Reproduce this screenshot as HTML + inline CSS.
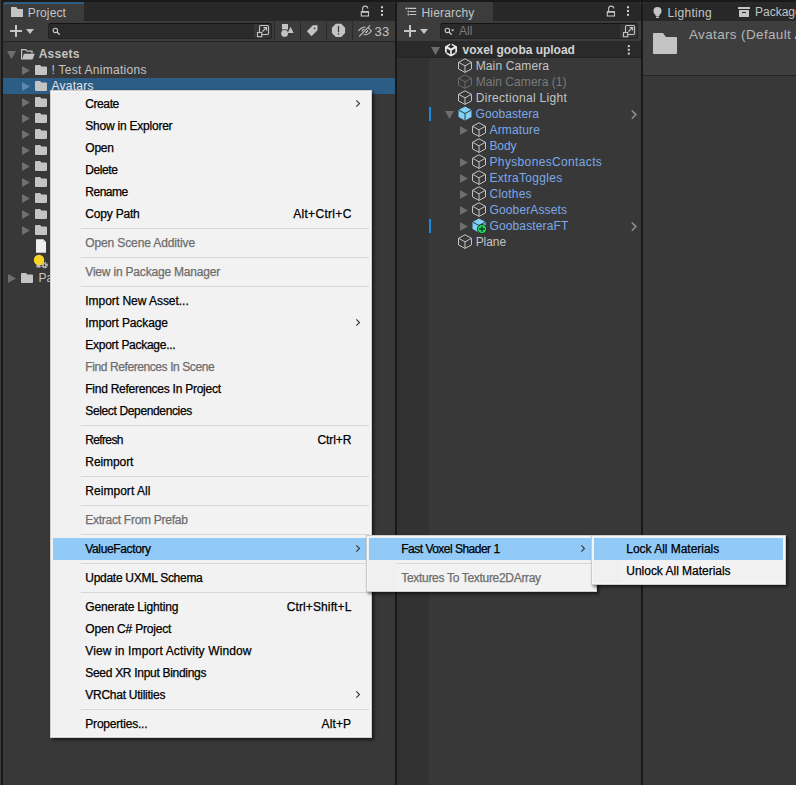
<!DOCTYPE html>
<html><head><meta charset="utf-8">
<style>
*{margin:0;padding:0;box-sizing:border-box}
html,body{width:796px;height:785px;overflow:hidden;background:#191919;font-family:"Liberation Sans",sans-serif;font-size:12px;color:#d2d2d2}
.a{position:absolute}
.t{position:absolute;white-space:nowrap;line-height:16px;height:16px}
svg{position:absolute;overflow:visible}
/* menu */
.menu{position:absolute;background:linear-gradient(to right,#f0f0f0 30px,#f2f2f2 30px);border:1px solid #cccccc;-webkit-text-stroke:0.25px currentColor;box-shadow:inset 1px 1px 0 #f6f6f6,inset -1px -1px 0 #f6f6f6,2px 2px 3px rgba(0,0,0,0.55);font-size:12px;color:#000}
.mi{position:absolute;left:0;right:0;height:22px;line-height:22px;white-space:nowrap}
.mi .l{position:absolute}
.mi .s{position:absolute}
.mi.d{color:#6d6d6d}
.mi.h::before{content:"";position:absolute;left:2px;right:2px;top:0;bottom:0;background:#91c9f7}
.sep{position:absolute;left:30px;right:2px;height:1px;background:#d7d7d7}
.arr{position:absolute;right:11px;top:7px;width:5px;height:8px}
</style></head><body>

<!-- left edge strip -->
<div class="a" style="left:0;top:0;width:1px;height:785px;background:#3a3a3a"></div>

<!-- ================= PROJECT PANEL ================= -->
<div class="a" style="left:3px;top:2px;width:392px;height:783px;background:#383838"></div>
<div class="a" style="left:3px;top:2px;width:392px;height:19px;background:#282828;border-radius:4px 4px 0 0"></div>
<!-- tab -->
<div class="a" style="left:3px;top:2px;width:81px;height:19px;background:#3c3c3c;border-radius:4px 0 0 0;border-top:2px solid #2c5d87"></div>
<svg style="left:0;top:0" width="40" height="20"><path d="M11 7H16.2L17.8 9H23V17H11Z" fill="#c4c4c4"/></svg>
<div class="t" style="left:27.80px;top:5px;color:#c4c4c4;font-size:12px;letter-spacing:0.133px">Project</div>
<!-- lock & dots -->
<svg style="left:0;top:0" width="396" height="20"><path d="M362.6 11V8.8A2.6 2.6 0 0 1 367.8 8.6" fill="none" stroke="#c4c4c4" stroke-width="1.1"/><rect x="361.3" y="11.6" width="7.2" height="4.4" fill="none" stroke="#c4c4c4" stroke-width="1.1"/><rect x="361.3" y="11.2" width="7.2" height="1.6" fill="#c4c4c4"/></svg>
<svg style="left:0;top:0" width="396" height="20"><rect x="381" y="6.2" width="2" height="2" fill="#d0d0d0"/><rect x="381" y="10" width="2" height="2" fill="#d0d0d0"/><rect x="381" y="13.8" width="2" height="2" fill="#d0d0d0"/></svg>
<!-- toolbar -->
<div class="a" style="left:3px;top:21px;width:392px;height:20px;background:#3c3c3c"></div>
<div class="a" style="left:3px;top:41px;width:392px;height:1px;background:#242424"></div>
<svg style="left:10px;top:25px" width="12" height="12"><path d="M6 0V12M0 6H12" stroke="#c4c4c4" stroke-width="2"/></svg>
<svg style="left:26px;top:29px" width="8" height="5"><path d="M0 0H8L4 5Z" fill="#c4c4c4"/></svg>
<div class="a" style="left:48px;top:23px;width:224px;height:16px;background:#2a2a2a;border:1px solid #232323;border-top-color:#151515;border-radius:3px"></div>
<div class="a" style="left:254px;top:24px;width:17px;height:14px;background:#353535;border-radius:0 3px 3px 0"></div>
<svg style="left:0;top:0" width="80" height="42"><circle cx="55.4" cy="30.4" r="2.2" fill="none" stroke="#c8c8c8" stroke-width="1.1"/><path d="M57 32L59.7 34.7" stroke="#c8c8c8" stroke-width="1.3"/></svg>
<svg style="left:0;top:0" width="396" height="42"><rect x="259.5" y="25.5" width="9" height="9" rx="1.2" fill="none" stroke="#c4c4c4" stroke-width="1.1"/><rect x="257.5" y="32.5" width="4.2" height="4.2" fill="#2f2f2f" stroke="#c4c4c4" stroke-width="1.1"/><path d="M262.5 31.5L266.3 27.7M263.5 27.5H266.5V30.5" fill="none" stroke="#c4c4c4" stroke-width="1.2"/></svg>
<div class="a" style="left:274px;top:21px;width:1px;height:20px;background:#2a2a2a"></div>
<div class="a" style="left:300px;top:21px;width:1px;height:20px;background:#2a2a2a"></div>
<div class="a" style="left:326px;top:21px;width:1px;height:20px;background:#2a2a2a"></div>
<div class="a" style="left:352px;top:21px;width:1px;height:20px;background:#2a2a2a"></div>
<svg style="left:0;top:0" width="396" height="42"><rect x="282" y="24" width="6" height="5.6" fill="#c4c4c4"/><circle cx="284.6" cy="33.4" r="3.9" fill="#3c3c3c"/><path d="M290.6 25.8L294.4 33.6H286.8Z" fill="#3c3c3c"/><circle cx="284.6" cy="33.4" r="3.4" fill="#c4c4c4"/><path d="M290.6 26.8L293.6 33H287.6Z" fill="#c4c4c4"/></svg>
<svg style="left:0;top:0" width="396" height="42"><path d="M307.2 31.2L313 25.6H317.2V30.2L311.5 35.9Z" fill="#c4c4c4" stroke="#c4c4c4" stroke-width="0.6" stroke-linejoin="round"/><circle cx="314.6" cy="28.3" r="0.9" fill="#3c3c3c"/></svg>
<svg style="left:0;top:0" width="396" height="42"><path d="M335.8 23.8H341.2L345.1 27.7V33.1L341.2 37H335.8L331.9 33.1V27.7Z" fill="#c4c4c4"/><path d="M338.5 26V32.2" stroke="#3c3c3c" stroke-width="1.3"/><rect x="337.8" y="33.2" width="1.4" height="1.4" fill="#3c3c3c"/></svg>
<svg style="left:0;top:0" width="396" height="42"><path d="M358.4 31C360.5 28.2 363.6 27 365.5 27M368 28C369.5 28.7 370.5 29.8 371.4 31C369.5 33.6 366.5 35 363.5 34.7" fill="none" stroke="#c4c4c4" stroke-width="1.1"/><path d="M362 31.5A3 3 0 0 1 364.5 29" fill="none" stroke="#c4c4c4" stroke-width="1.2"/><path d="M365.5 33L368 30.5" stroke="#c4c4c4" stroke-width="1.1"/><path d="M359.2 36.3L370.2 25.3" stroke="#c4c4c4" stroke-width="1.1"/></svg>
<div class="t" style="left:374.6px;top:24px;color:#c4c4c4;font-size:13px;letter-spacing:0.3px">33</div>

<!-- project tree -->
<div class="a" style="left:3px;top:78px;width:392px;height:16px;background:#2c5d87"></div>
<svg style="left:7px;top:51px" width="9" height="8"><path d="M0 0H9L4.5 8Z" fill="#6e6e6e"/></svg>
<svg style="left:21px;top:49px" width="14" height="11"><path d="M0.6 10.4V0.6H4.6L6.1 2.1H11V4.5" fill="none" stroke="#c4c4c4" stroke-width="1.2"/><path d="M3 4.8H13.8L11.5 10.5H1Z" fill="#c4c4c4"/></svg>
<svg style="left:22px;top:66px" width="8" height="9"><path d="M0 0L8 4.5L0 9Z" fill="#6e6e6e"/></svg>
<svg style="left:35px;top:65px" width="12" height="10"><path d="M1 0H5L6.5 1.5H11A1 1 0 0 1 12 2.5V9A1 1 0 0 1 11 10H1A1 1 0 0 1 0 9V1A1 1 0 0 1 1 0Z" fill="#c4c4c4"/></svg>
<svg style="left:22px;top:82px" width="8" height="9"><path d="M0 0L8 4.5L0 9Z" fill="#5f87ab"/></svg>
<svg style="left:35px;top:81px" width="12" height="10"><path d="M1 0H5L6.5 1.5H11A1 1 0 0 1 12 2.5V9A1 1 0 0 1 11 10H1A1 1 0 0 1 0 9V1A1 1 0 0 1 1 0Z" fill="#c4c4c4"/></svg>
<svg style="left:22px;top:98px" width="8" height="9"><path d="M0 0L8 4.5L0 9Z" fill="#6e6e6e"/></svg>
<svg style="left:35px;top:97px" width="12" height="10"><path d="M1 0H5L6.5 1.5H11A1 1 0 0 1 12 2.5V9A1 1 0 0 1 11 10H1A1 1 0 0 1 0 9V1A1 1 0 0 1 1 0Z" fill="#c4c4c4"/></svg>
<svg style="left:22px;top:114px" width="8" height="9"><path d="M0 0L8 4.5L0 9Z" fill="#6e6e6e"/></svg>
<svg style="left:35px;top:113px" width="12" height="10"><path d="M1 0H5L6.5 1.5H11A1 1 0 0 1 12 2.5V9A1 1 0 0 1 11 10H1A1 1 0 0 1 0 9V1A1 1 0 0 1 1 0Z" fill="#c4c4c4"/></svg>
<svg style="left:22px;top:130px" width="8" height="9"><path d="M0 0L8 4.5L0 9Z" fill="#6e6e6e"/></svg>
<svg style="left:35px;top:129px" width="12" height="10"><path d="M1 0H5L6.5 1.5H11A1 1 0 0 1 12 2.5V9A1 1 0 0 1 11 10H1A1 1 0 0 1 0 9V1A1 1 0 0 1 1 0Z" fill="#c4c4c4"/></svg>
<svg style="left:22px;top:146px" width="8" height="9"><path d="M0 0L8 4.5L0 9Z" fill="#6e6e6e"/></svg>
<svg style="left:35px;top:145px" width="12" height="10"><path d="M1 0H5L6.5 1.5H11A1 1 0 0 1 12 2.5V9A1 1 0 0 1 11 10H1A1 1 0 0 1 0 9V1A1 1 0 0 1 1 0Z" fill="#c4c4c4"/></svg>
<svg style="left:22px;top:162px" width="8" height="9"><path d="M0 0L8 4.5L0 9Z" fill="#6e6e6e"/></svg>
<svg style="left:35px;top:161px" width="12" height="10"><path d="M1 0H5L6.5 1.5H11A1 1 0 0 1 12 2.5V9A1 1 0 0 1 11 10H1A1 1 0 0 1 0 9V1A1 1 0 0 1 1 0Z" fill="#c4c4c4"/></svg>
<svg style="left:22px;top:178px" width="8" height="9"><path d="M0 0L8 4.5L0 9Z" fill="#6e6e6e"/></svg>
<svg style="left:35px;top:177px" width="12" height="10"><path d="M1 0H5L6.5 1.5H11A1 1 0 0 1 12 2.5V9A1 1 0 0 1 11 10H1A1 1 0 0 1 0 9V1A1 1 0 0 1 1 0Z" fill="#c4c4c4"/></svg>
<svg style="left:22px;top:194px" width="8" height="9"><path d="M0 0L8 4.5L0 9Z" fill="#6e6e6e"/></svg>
<svg style="left:35px;top:193px" width="12" height="10"><path d="M1 0H5L6.5 1.5H11A1 1 0 0 1 12 2.5V9A1 1 0 0 1 11 10H1A1 1 0 0 1 0 9V1A1 1 0 0 1 1 0Z" fill="#c4c4c4"/></svg>
<svg style="left:22px;top:210px" width="8" height="9"><path d="M0 0L8 4.5L0 9Z" fill="#6e6e6e"/></svg>
<svg style="left:35px;top:209px" width="12" height="10"><path d="M1 0H5L6.5 1.5H11A1 1 0 0 1 12 2.5V9A1 1 0 0 1 11 10H1A1 1 0 0 1 0 9V1A1 1 0 0 1 1 0Z" fill="#c4c4c4"/></svg>
<svg style="left:22px;top:226px" width="8" height="9"><path d="M0 0L8 4.5L0 9Z" fill="#6e6e6e"/></svg>
<svg style="left:35px;top:225px" width="12" height="10"><path d="M1 0H5L6.5 1.5H11A1 1 0 0 1 12 2.5V9A1 1 0 0 1 11 10H1A1 1 0 0 1 0 9V1A1 1 0 0 1 1 0Z" fill="#c4c4c4"/></svg>
<svg style="left:35px;top:239px" width="12" height="15"><path d="M1 0.2H8.3L11 2.9V13.8H1Z" fill="#efefef"/><path d="M8.3 0.2V2.9H11Z" fill="#c8c8c8"/></svg>
<svg style="left:33px;top:254px" width="16" height="15"><circle cx="6" cy="6" r="5.2" fill="#f6d523"/><rect x="3.5" y="11" width="4" height="2.5" fill="#bcbcbc"/><g transform="translate(11.5 11.2)"><circle r="2.6" fill="none" stroke="#e6e6e6" stroke-width="1.3" stroke-dasharray="1.2 0.85"/><circle r="1.6" fill="none" stroke="#e6e6e6" stroke-width="1"/></g></svg>
<svg style="left:8px;top:274px" width="8" height="9"><path d="M0 0L8 4.5L0 9Z" fill="#6e6e6e"/></svg>
<svg style="left:21px;top:273px" width="12" height="10"><path d="M1 0H5L6.5 1.5H11A1 1 0 0 1 12 2.5V9A1 1 0 0 1 11 10H1A1 1 0 0 1 0 9V1A1 1 0 0 1 1 0Z" fill="#c4c4c4"/></svg>
<div class="t" style="left:38.70px;top:46px;color:#c4c4c4;font-size:12px;font-weight:bold;letter-spacing:0.260px">Assets</div>
<div class="t" style="left:51.40px;top:62px;color:#c4c4c4;font-size:12px;letter-spacing:0.281px">! Test Animations</div>
<div class="t" style="left:51.50px;top:78px;color:#e4e4e4;font-size:12px;letter-spacing:0.267px">Avatars</div>
<div class="t" style="left:38.50px;top:270px;color:#c4c4c4;font-size:12px;letter-spacing:0.000px">Pa</div>

<!-- ================= HIERARCHY PANEL ================= -->
<div class="a" style="left:397px;top:2px;width:244px;height:783px;background:#383838"></div>
<div class="a" style="left:397px;top:2px;width:244px;height:19px;background:#282828;border-radius:4px 4px 0 0"></div>
<div class="a" style="left:397px;top:2px;width:96px;height:19px;background:#3c3c3c;border-radius:4px 0 0 0"></div>
<svg style="left:0;top:0" width="420" height="20"><path d="M407.8 8.4H416.2M409.8 11.5H416.2M409.8 14.5H416.2" stroke="#c8c8c8" stroke-width="1.2"/><path d="M405.2 8.4L406.4 7.2L407.6 8.4L406.4 9.6Z M407.2 11.5L408.4 10.3L409.6 11.5L408.4 12.7Z M407.2 14.5L408.4 13.3L409.6 14.5L408.4 15.7Z" fill="#c8c8c8"/><path d="M408.4 10V15.5" stroke="#8a8a8a" stroke-width="0.6"/></svg>
<div class="t" style="left:421.50px;top:5px;color:#c4c4c4;font-size:12px;letter-spacing:0.188px">Hierarchy</div>
<svg style="left:246px;top:0" width="396" height="20"><path d="M362.6 11V8.8A2.6 2.6 0 0 1 367.8 8.6" fill="none" stroke="#c4c4c4" stroke-width="1.1"/><rect x="361.3" y="11.6" width="7.2" height="4.4" fill="none" stroke="#c4c4c4" stroke-width="1.1"/><rect x="361.3" y="11.2" width="7.2" height="1.6" fill="#c4c4c4"/></svg>
<svg style="left:246px;top:0" width="396" height="20"><rect x="381" y="6.2" width="2" height="2" fill="#d0d0d0"/><rect x="381" y="10" width="2" height="2" fill="#d0d0d0"/><rect x="381" y="13.8" width="2" height="2" fill="#d0d0d0"/></svg>
<div class="a" style="left:397px;top:21px;width:244px;height:20px;background:#3c3c3c"></div>
<svg style="left:404px;top:25px" width="12" height="12"><path d="M6 0V12M0 6H12" stroke="#c4c4c4" stroke-width="2"/></svg>
<svg style="left:420px;top:29px" width="8" height="5"><path d="M0 0H8L4 5Z" fill="#c4c4c4"/></svg>
<div class="a" style="left:440px;top:23px;width:198px;height:16px;background:#2a2a2a;border:1px solid #232323;border-top-color:#151515;border-radius:3px"></div>
<div class="a" style="left:620px;top:24px;width:17px;height:14px;background:#353535;border-radius:0 3px 3px 0"></div>
<svg style="left:392px;top:0" width="80" height="42"><circle cx="55.4" cy="30.4" r="2.2" fill="none" stroke="#c8c8c8" stroke-width="1.1"/><path d="M57 32L59.7 34.7" stroke="#c8c8c8" stroke-width="1.3"/><path d="M59 29.6H62.4L60.7 31.6Z" fill="#c8c8c8"/></svg>
<div class="t" style="left:459px;top:23px;color:#7c7c7c">All</div>
<svg style="left:366px;top:0" width="396" height="42"><rect x="259.5" y="25.5" width="9" height="9" rx="1.2" fill="none" stroke="#c4c4c4" stroke-width="1.1"/><rect x="257.5" y="32.5" width="4.2" height="4.2" fill="#2f2f2f" stroke="#c4c4c4" stroke-width="1.1"/><path d="M262.5 31.5L266.3 27.7M263.5 27.5H266.5V30.5" fill="none" stroke="#c4c4c4" stroke-width="1.2"/></svg>
<!-- scene header -->
<div class="a" style="left:397px;top:41px;width:244px;height:16px;background:#2a2a2a"></div>
<div class="a" style="left:397px;top:57px;width:244px;height:1px;background:#242424"></div>
<div class="a" style="left:397px;top:58px;width:32px;height:727px;background:#323232"></div>
<svg style="left:431px;top:47px" width="9" height="8"><path d="M0 0H9L4.5 8Z" fill="#6e6e6e"/></svg>
<svg style="left:0;top:0" width="641" height="60"><path d="M451 43L457 46.4V53.2L451 56.6L445 53.2V46.4Z" fill="#ececec"/><path d="M446.7 48.5L450.2 50.5V54.3L446.7 52.3Z M455.3 48.5L451.8 50.5V54.3L455.3 52.3Z M450.2 42.6H451.8V45.3L454.3 46.6L451 48.4L447.7 46.6L450.2 45.3Z M444.4 51.8L446.8 53.2L446.2 54L444.4 53Z M457.6 51.8L455.2 53.2L455.8 54L457.6 53Z" fill="#2a2a2a"/></svg>
<svg style="left:0;top:0" width="641" height="60"><rect x="627.8" y="45.1" width="2" height="2" fill="#d0d0d0"/><rect x="627.8" y="48.8" width="2" height="2" fill="#d0d0d0"/><rect x="627.8" y="52.6" width="2" height="2" fill="#d0d0d0"/></svg>
<svg style="left:458px;top:58px" width="14" height="15" viewBox="0 0 14 15"><path d="M7 0.8L13.5 4.3V10.9L7 14.4L0.5 10.9V4.3Z" fill="none" stroke="#c4c4c4" stroke-width="1" stroke-linejoin="round"/><path d="M0.8 4.4L7 7.8L13.2 4.4M7 7.8V14.2" fill="none" stroke="#c4c4c4" stroke-width="1"/></svg>
<svg style="left:458px;top:74px" width="14" height="15" viewBox="0 0 14 15"><path d="M7 0.8L13.5 4.3V10.9L7 14.4L0.5 10.9V4.3Z" fill="none" stroke="#6a6a6a" stroke-width="1" stroke-linejoin="round"/><path d="M0.8 4.4L7 7.8L13.2 4.4M7 7.8V14.2" fill="none" stroke="#6a6a6a" stroke-width="1"/></svg>
<svg style="left:458px;top:90px" width="14" height="15" viewBox="0 0 14 15"><path d="M7 0.8L13.5 4.3V10.9L7 14.4L0.5 10.9V4.3Z" fill="none" stroke="#c4c4c4" stroke-width="1" stroke-linejoin="round"/><path d="M0.8 4.4L7 7.8L13.2 4.4M7 7.8V14.2" fill="none" stroke="#c4c4c4" stroke-width="1"/></svg>
<svg style="left:445px;top:111px" width="9" height="8"><path d="M0 0H9L4.5 8Z" fill="#6e6e6e"/></svg>
<svg style="left:458px;top:106px" width="14" height="15" viewBox="0 0 14 15"><path d="M7 0.5L13.5 4V11L7 14.5L0.5 11V4Z" fill="#7fd1f5"/><path d="M0.8 4.2L7 7.5L13.2 4.2M7 7.5V14.3" fill="none" stroke="#2b3a44" stroke-width="1"/></svg>
<div class="a" style="left:429px;top:107px;width:2px;height:14px;background:#1f8ad8"></div>
<svg style="left:631px;top:110px" width="6" height="9"><path d="M0.8 0.6L5 4.6L0.8 8.6" fill="none" stroke="#8e8e8e" stroke-width="1.5"/></svg>
<svg style="left:460px;top:126px" width="8" height="9"><path d="M0 0L8 4.5L0 9Z" fill="#6e6e6e"/></svg>
<svg style="left:472px;top:122px" width="14" height="15" viewBox="0 0 14 15"><path d="M7 0.8L13.5 4.3V10.9L7 14.4L0.5 10.9V4.3Z" fill="none" stroke="#c4c4c4" stroke-width="1" stroke-linejoin="round"/><path d="M0.8 4.4L7 7.8L13.2 4.4M7 7.8V14.2" fill="none" stroke="#c4c4c4" stroke-width="1"/></svg>
<svg style="left:472px;top:138px" width="14" height="15" viewBox="0 0 14 15"><path d="M7 0.8L13.5 4.3V10.9L7 14.4L0.5 10.9V4.3Z" fill="none" stroke="#c4c4c4" stroke-width="1" stroke-linejoin="round"/><path d="M0.8 4.4L7 7.8L13.2 4.4M7 7.8V14.2" fill="none" stroke="#c4c4c4" stroke-width="1"/></svg>
<svg style="left:460px;top:158px" width="8" height="9"><path d="M0 0L8 4.5L0 9Z" fill="#6e6e6e"/></svg>
<svg style="left:472px;top:154px" width="14" height="15" viewBox="0 0 14 15"><path d="M7 0.8L13.5 4.3V10.9L7 14.4L0.5 10.9V4.3Z" fill="none" stroke="#c4c4c4" stroke-width="1" stroke-linejoin="round"/><path d="M0.8 4.4L7 7.8L13.2 4.4M7 7.8V14.2" fill="none" stroke="#c4c4c4" stroke-width="1"/></svg>
<svg style="left:460px;top:174px" width="8" height="9"><path d="M0 0L8 4.5L0 9Z" fill="#6e6e6e"/></svg>
<svg style="left:472px;top:170px" width="14" height="15" viewBox="0 0 14 15"><path d="M7 0.8L13.5 4.3V10.9L7 14.4L0.5 10.9V4.3Z" fill="none" stroke="#c4c4c4" stroke-width="1" stroke-linejoin="round"/><path d="M0.8 4.4L7 7.8L13.2 4.4M7 7.8V14.2" fill="none" stroke="#c4c4c4" stroke-width="1"/></svg>
<svg style="left:460px;top:190px" width="8" height="9"><path d="M0 0L8 4.5L0 9Z" fill="#6e6e6e"/></svg>
<svg style="left:472px;top:186px" width="14" height="15" viewBox="0 0 14 15"><path d="M7 0.8L13.5 4.3V10.9L7 14.4L0.5 10.9V4.3Z" fill="none" stroke="#c4c4c4" stroke-width="1" stroke-linejoin="round"/><path d="M0.8 4.4L7 7.8L13.2 4.4M7 7.8V14.2" fill="none" stroke="#c4c4c4" stroke-width="1"/></svg>
<svg style="left:460px;top:206px" width="8" height="9"><path d="M0 0L8 4.5L0 9Z" fill="#6e6e6e"/></svg>
<svg style="left:472px;top:202px" width="14" height="15" viewBox="0 0 14 15"><path d="M7 0.8L13.5 4.3V10.9L7 14.4L0.5 10.9V4.3Z" fill="none" stroke="#c4c4c4" stroke-width="1" stroke-linejoin="round"/><path d="M0.8 4.4L7 7.8L13.2 4.4M7 7.8V14.2" fill="none" stroke="#c4c4c4" stroke-width="1"/></svg>
<svg style="left:460px;top:222px" width="8" height="9"><path d="M0 0L8 4.5L0 9Z" fill="#6e6e6e"/></svg>
<svg style="left:472px;top:218px" width="14" height="15" viewBox="0 0 14 15"><path d="M7 0.5L13.5 4V11L7 14.5L0.5 11V4Z" fill="#7fd1f5"/><path d="M0.8 4.2L7 7.5L13.2 4.2M7 7.5V14.3" fill="none" stroke="#2b3a44" stroke-width="1"/></svg>
<div class="a" style="left:429px;top:219px;width:2px;height:14px;background:#1f8ad8"></div>
<svg style="left:631px;top:222px" width="6" height="9"><path d="M0.8 0.6L5 4.6L0.8 8.6" fill="none" stroke="#8e8e8e" stroke-width="1.5"/></svg>
<svg style="left:477px;top:224px" width="10" height="10"><circle cx="5" cy="5" r="4.6" fill="#1ed760" stroke="#1b2b20" stroke-width="0.9"/><path d="M5 2.2V7.8M2.2 5H7.8" stroke="#17351f" stroke-width="1.3"/></svg>
<svg style="left:458px;top:234px" width="14" height="15" viewBox="0 0 14 15"><path d="M7 0.8L13.5 4.3V10.9L7 14.4L0.5 10.9V4.3Z" fill="none" stroke="#c4c4c4" stroke-width="1" stroke-linejoin="round"/><path d="M0.8 4.4L7 7.8L13.2 4.4M7 7.8V14.2" fill="none" stroke="#c4c4c4" stroke-width="1"/></svg>
<div class="t" style="left:462.60px;top:42px;color:#d2d2d2;font-size:12px;font-weight:bold;letter-spacing:-0.024px">voxel gooba upload</div>
<div class="t" style="left:475.70px;top:58px;color:#c4c4c4;font-size:12px;letter-spacing:0.130px">Main Camera</div>
<div class="t" style="left:475.70px;top:74px;color:#7a7a7a;font-size:12px;letter-spacing:0.064px">Main Camera (1)</div>
<div class="t" style="left:475.70px;top:90px;color:#c4c4c4;font-size:12px;letter-spacing:0.319px">Directional Light</div>
<div class="t" style="left:475.50px;top:106px;color:#7ba9e8;font-size:12px;letter-spacing:0.089px">Goobastera</div>
<div class="t" style="left:489.50px;top:122px;color:#7ba9e8;font-size:12px;letter-spacing:0.157px">Armature</div>
<div class="t" style="left:489.50px;top:138px;color:#7ba9e8;font-size:12px;letter-spacing:-0.133px">Body</div>
<div class="t" style="left:489.50px;top:154px;color:#7ba9e8;font-size:12px;letter-spacing:0.350px">PhysbonesContacts</div>
<div class="t" style="left:489.50px;top:170px;color:#7ba9e8;font-size:12px;letter-spacing:0.300px">ExtraToggles</div>
<div class="t" style="left:489.50px;top:186px;color:#7ba9e8;font-size:12px;letter-spacing:0.233px">Clothes</div>
<div class="t" style="left:489.50px;top:202px;color:#7ba9e8;font-size:12px;letter-spacing:0.136px">GooberAssets</div>
<div class="t" style="left:489.50px;top:218px;color:#7ba9e8;font-size:12px;letter-spacing:0.127px">GoobasteraFT</div>
<div class="t" style="left:475.70px;top:234px;color:#c4c4c4;font-size:12px;letter-spacing:-0.075px">Plane</div>

<!-- ================= RIGHT PANEL ================= -->
<div class="a" style="left:643px;top:2px;width:153px;height:783px;background:#383838"></div>
<div class="a" style="left:643px;top:2px;width:153px;height:19px;background:#282828;border-radius:4px 0 0 0"></div>
<div class="a" style="left:643px;top:21px;width:153px;height:54px;background:#3e3e3e"></div>
<div class="a" style="left:643px;top:75px;width:153px;height:1px;background:#242424"></div>
<svg style="left:653px;top:7px" width="9" height="11"><circle cx="4.5" cy="4" r="4" fill="#c4c4c4"/><rect x="2.5" y="7" width="4" height="2" fill="#c4c4c4"/><rect x="3" y="9.5" width="3" height="1.5" fill="#c4c4c4"/></svg>
<div class="t" style="left:667.50px;top:5px;color:#c4c4c4;font-size:12px;letter-spacing:0.300px">Lighting</div>
<svg style="left:738px;top:7px" width="12" height="10"><rect x="0" y="0" width="12" height="2" fill="#c4c4c4"/><path d="M1 3H11V10H1Z" fill="#c4c4c4"/><rect x="4" y="5" width="4" height="1" fill="#282828"/></svg>
<div class="t" style="left:755px;top:4px;color:#c4c4c4">Package Manager</div>
<svg style="left:653px;top:33px" width="24" height="21"><path d="M1 0H10L13 4H23A1 1 0 0 1 24 5V20A1 1 0 0 1 23 21H1A1 1 0 0 1 0 20V1A1 1 0 0 1 1 0Z" fill="#c4c4c4"/></svg>
<div class="t" style="left:689px;top:27px;color:#b4b4b4;font-size:13.5px;letter-spacing:0.35px">Avatars (Default Asset)</div>

<!-- ================= MENUS ================= -->
<div class="menu" style="left:50px;top:90px;width:322px;height:648px"><div class="mi" style="top:2px"><span class="l" style="left:34.30px;letter-spacing:-0.420px">Create</span><svg class="arr" width="5" height="8"><path d="M1.3 0.4L4.5 3.5L1.3 6.6" fill="none" stroke="#383838" stroke-width="1.15"/></svg></div>
<div class="mi" style="top:24px"><span class="l" style="left:34.30px;letter-spacing:-0.227px">Show in Explorer</span></div>
<div class="mi" style="top:46px"><span class="l" style="left:34.30px;letter-spacing:-0.233px">Open</span></div>
<div class="mi" style="top:68px"><span class="l" style="left:34.30px;letter-spacing:-0.420px">Delete</span></div>
<div class="mi" style="top:90px"><span class="l" style="left:34.30px;letter-spacing:-0.500px">Rename</span></div>
<div class="mi" style="top:112px"><span class="l" style="left:34.30px;letter-spacing:-0.200px">Copy Path</span><span class="s" style="left:242.20px;letter-spacing:0.311px">Alt+Ctrl+C</span></div>
<div class="sep" style="top:137px"></div>
<div class="mi d" style="top:141px"><span class="l" style="left:34.30px;letter-spacing:-0.128px">Open Scene Additive</span></div>
<div class="sep" style="top:166px"></div>
<div class="mi d" style="top:170px"><span class="l" style="left:34.30px;letter-spacing:-0.195px">View in Package Manager</span></div>
<div class="sep" style="top:195px"></div>
<div class="mi" style="top:199px"><span class="l" style="left:34.30px;letter-spacing:-0.033px">Import New Asset...</span></div>
<div class="mi" style="top:221px"><span class="l" style="left:34.30px;letter-spacing:-0.108px">Import Package</span><svg class="arr" width="5" height="8"><path d="M1.3 0.4L4.5 3.5L1.3 6.6" fill="none" stroke="#383838" stroke-width="1.15"/></svg></div>
<div class="mi" style="top:243px"><span class="l" style="left:34.30px;letter-spacing:-0.275px">Export Package...</span></div>
<div class="mi d" style="top:265px"><span class="l" style="left:34.30px;letter-spacing:-0.409px">Find References In Scene</span></div>
<div class="mi" style="top:287px"><span class="l" style="left:34.30px;letter-spacing:-0.256px">Find References In Project</span></div>
<div class="mi" style="top:309px"><span class="l" style="left:34.30px;letter-spacing:-0.361px">Select Dependencies</span></div>
<div class="sep" style="top:334px"></div>
<div class="mi" style="top:338px"><span class="l" style="left:34.30px;letter-spacing:-0.650px">Refresh</span><span class="s" style="left:266.40px;letter-spacing:-0.080px">Ctrl+R</span></div>
<div class="mi" style="top:360px"><span class="l" style="left:34.30px;letter-spacing:-0.086px">Reimport</span></div>
<div class="sep" style="top:385px"></div>
<div class="mi" style="top:389px"><span class="l" style="left:34.30px;letter-spacing:0.036px">Reimport All</span></div>
<div class="sep" style="top:414px"></div>
<div class="mi d" style="top:418px"><span class="l" style="left:34.30px;letter-spacing:-0.267px">Extract From Prefab</span></div>
<div class="sep" style="top:443px"></div>
<div class="mi h" style="top:447px"><span class="l" style="left:34.30px;letter-spacing:-0.364px">ValueFactory</span><svg class="arr" width="5" height="8"><path d="M1.3 0.4L4.5 3.5L1.3 6.6" fill="none" stroke="#383838" stroke-width="1.15"/></svg></div>
<div class="sep" style="top:472px"></div>
<div class="mi" style="top:476px"><span class="l" style="left:34.30px;letter-spacing:-0.282px">Update UXML Schema</span></div>
<div class="sep" style="top:501px"></div>
<div class="mi" style="top:505px"><span class="l" style="left:34.30px;letter-spacing:-0.144px">Generate Lighting</span><span class="s" style="left:235.70px;letter-spacing:0.118px">Ctrl+Shift+L</span></div>
<div class="mi" style="top:527px"><span class="l" style="left:34.30px;letter-spacing:-0.186px">Open C# Project</span></div>
<div class="mi" style="top:549px"><span class="l" style="left:34.30px;letter-spacing:0.128px">View in Import Activity Window</span></div>
<div class="mi" style="top:571px"><span class="l" style="left:34.30px;letter-spacing:-0.300px">Seed XR Input Bindings</span></div>
<div class="mi" style="top:593px"><span class="l" style="left:34.30px;letter-spacing:-0.260px">VRChat Utilities</span><svg class="arr" width="5" height="8"><path d="M1.3 0.4L4.5 3.5L1.3 6.6" fill="none" stroke="#383838" stroke-width="1.15"/></svg></div>
<div class="sep" style="top:618px"></div>
<div class="mi" style="top:622px"><span class="l" style="left:34.30px;letter-spacing:-0.200px">Properties...</span><span class="s" style="left:270.50px;letter-spacing:0.125px">Alt+P</span></div></div><div class="menu" style="left:366px;top:535px;width:231px;height:57px"><div class="mi h" style="top:2px"><span class="l" style="left:34.30px;letter-spacing:-0.517px">Fast Voxel Shader 1</span><svg class="arr" width="5" height="8"><path d="M1.3 0.4L4.5 3.5L1.3 6.6" fill="none" stroke="#383838" stroke-width="1.15"/></svg></div>
<div class="sep" style="top:27px"></div>
<div class="mi d" style="top:31px"><span class="l" style="left:34.30px;letter-spacing:-0.312px">Textures To Texture2DArray</span></div></div><div class="menu" style="left:591px;top:535px;width:195px;height:50px"><div class="mi h" style="top:2px"><span class="l" style="left:34.30px;letter-spacing:-0.029px">Lock All Materials</span></div>
<div class="mi" style="top:24px"><span class="l" style="left:34.30px;letter-spacing:-0.021px">Unlock All Materials</span></div></div>

</body></html>
